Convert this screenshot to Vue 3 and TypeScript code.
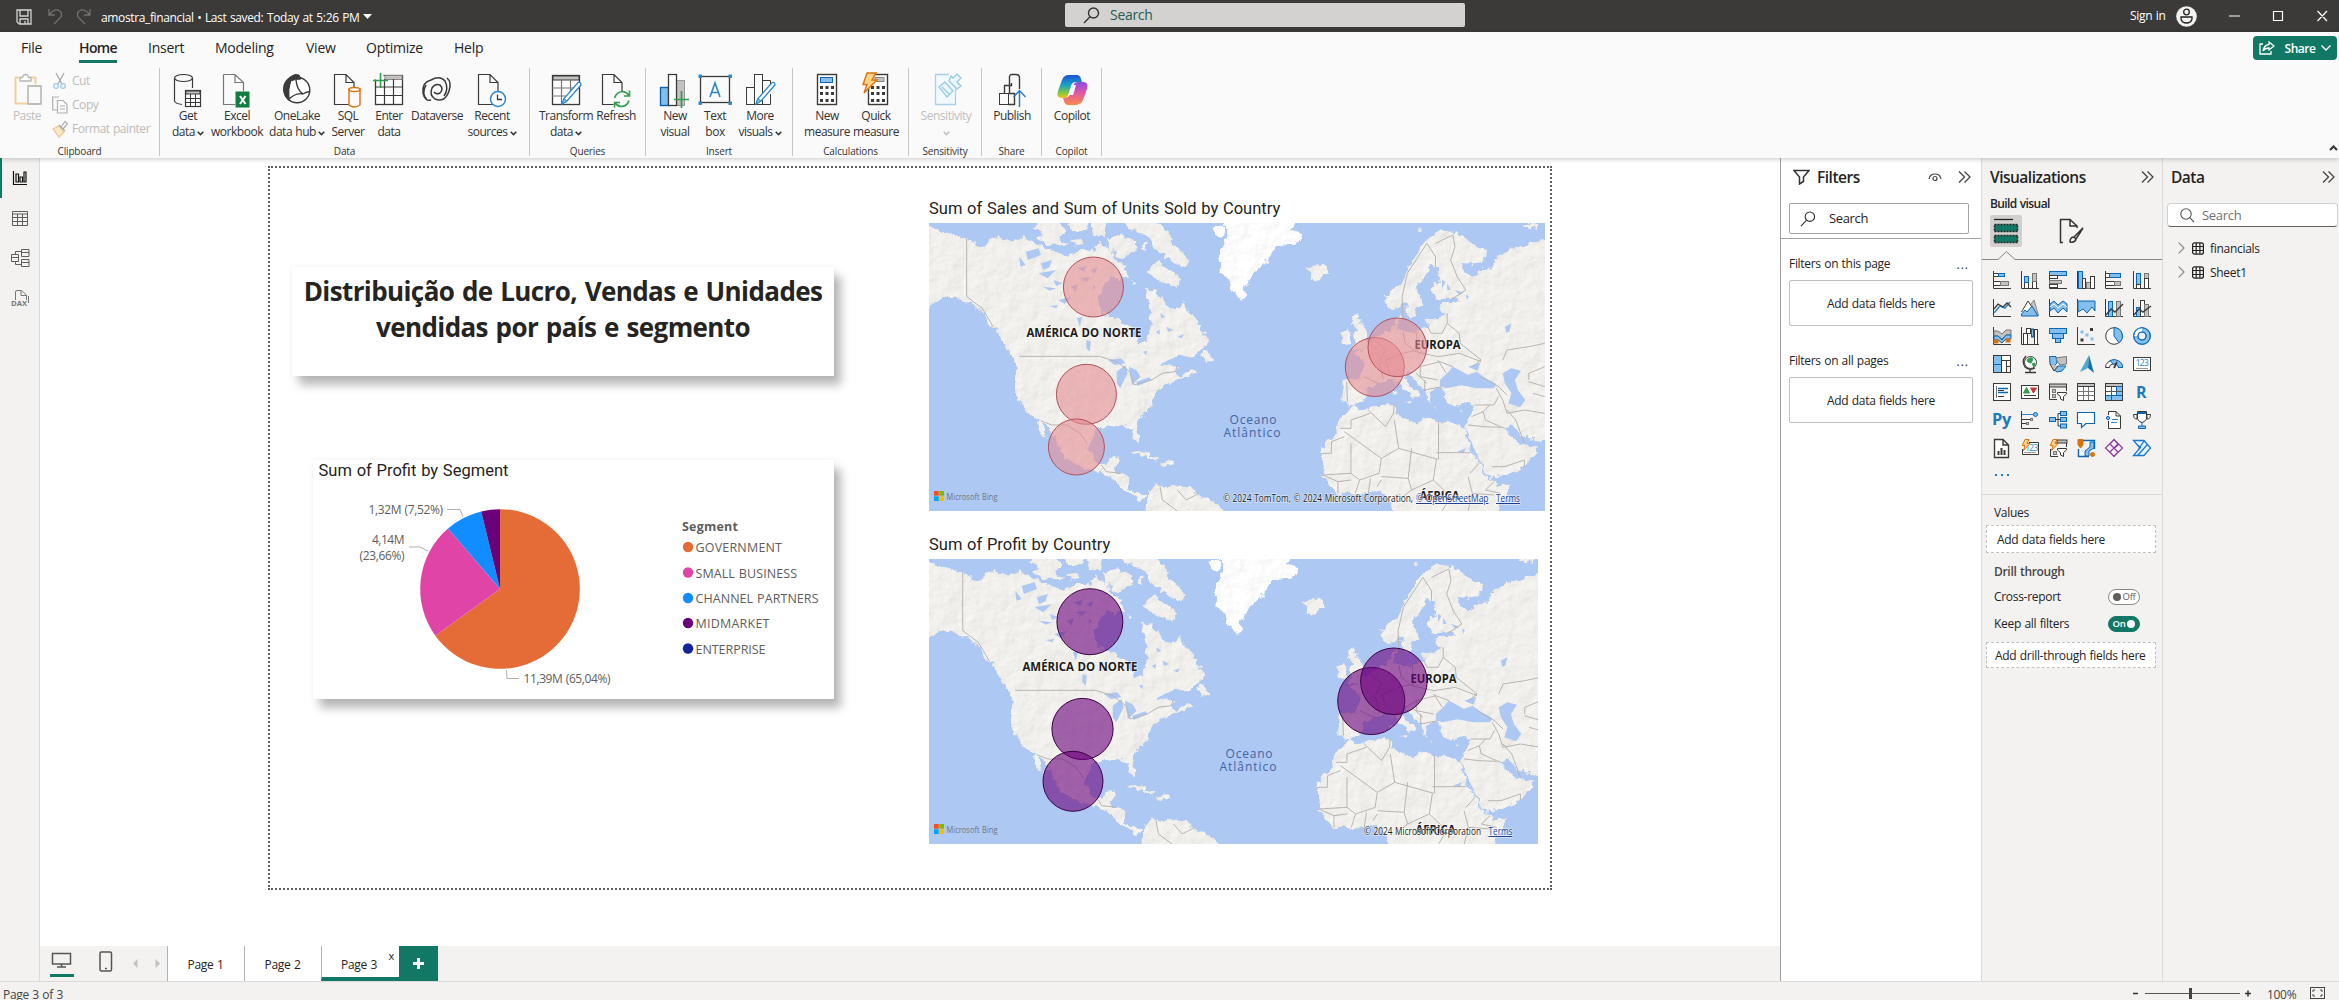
<script setup lang="ts">
import { ref } from 'vue'

const K = '#3b3a39'
const B = '#0a67b5'
const L = '#83beec'
const G = '#c4c2c0'
const GN = '#2f9e4f'
const OR = '#d9730d'

const r = (x: number, y: number, w: number, h: number, fill = 'none', stroke = K, sw = 1) =>
  `<rect x="${x}" y="${y}" width="${w}" height="${h}" fill="${fill}" stroke="${stroke}" stroke-width="${sw}"/>`
const p = (d: string, stroke = K, fill = 'none', sw = 1) =>
  `<path d="${d}" fill="${fill}" stroke="${stroke}" stroke-width="${sw}"/>`
const c = (x: number, y: number, rad: number, fill = 'none', stroke = K, sw = 1) =>
  `<circle cx="${x}" cy="${y}" r="${rad}" fill="${fill}" stroke="${stroke}" stroke-width="${sw}"/>`

const axis = p('M.5 0V17.5H18')
const bolt = p('M4 .5H8L6 4.5H9L2.5 11.5L4 6.5H1.2Z', '#d9730d', '#ffd28a')
const funnel = p('M8.5 9.5H17.5V11L14.5 13.5V17.5L11.5 16V13.5L8.5 11Z', K, '#fff')
const pencil = p('M31 12L17 28L12 31L14 25.5L28 9.5Q31 8.5 31 12Z', '#2b88c8', '#fafafa', 1.3) + p('M12 31L14 25.5L17 28Z', '#2b88c8', L)
const file = (s = K) => p('M2.5 1.5H14L22 9.5V31.5H2.5ZM14 1.5V9.5H22', s, 'none', 1.2)

const icons: Record<string, string> = {
  getdata:
    p('M2.5 5V28Q3 30.5 10 31.5M20.5 5V15', K, 'none', 1.2) +
    `<ellipse cx="11.500" cy="5" rx="9" ry="3.500" fill="none" stroke="${K}" stroke-width="1.200"/>` +
    r(13.5, 17.5, 15, 16, '#fff', K, 1.2) + r(14, 18, 14, 3, G, K) + p('M13.500 25.500H28.500M13.500 29.500H28.500M18.500 21V33M23.500 21V33'),
  excel: p('M2.500 1.500H14L22.500 9.500V18M14 1.500V9.500H22.500M14 31.500H2.500V1.500', '#777', 'none', 1.2) + r(15, 19, 13, 15, '#117c41', '#117c41') + p('M19 23L24.500 31M24.500 23L19 31', '#fff', 'none', 2),
  onelake:
    c(16, 17, 12.8, '#fff', K, 1.4) +
    p('M14 1.500Q2 6 2.500 17Q4 25 8 27Q7 16 9.500 8Q14 6 20 6L18 2Z', K, K) + p('M15 7Q16 17 22 21Q27 18 29 19M7 27Q15 19 22 21M10 7Q5 17 8 27', K, 'none', 1.4),
  sql: file() + p('M17 16V32Q22 36 28 32V16Z', '#d9730d', '#fafafa', 1.4) + `<ellipse cx="22.500" cy="16.500" rx="5.500" ry="2" fill="#fff" stroke="#d9730d" stroke-width="1.400"/>`,
  enter: r(2.5, 2.5, 27, 29, '#fff', K, 1.3) + r(12, 2.5, 17, 4, G, '#888') + p('M2 14H29M2 22.500H29M11.500 6V31M20.500 6V31', K, 'none', 1.2) + r(0, 1, 10, 5, '#fafafa', '#fafafa') + p('M0 7.500H15M7.500 0V15', GN, 'none', 1.6),
  dataverse: p('M26 5Q31 9 28 18Q24 30 14 26Q8 22 11 15Q14 10 19 12Q23 16 19 20Q15 22 13 19M10 7Q1 9 2 20Q4 29 10 27M10 7Q19 2 24 8Q28 16 23 23M6 27Q0 21 5 12', K, 'none', 1.5),
  recent: file() + c(22, 26, 7.5, '#fff', '#2b88c8', 1.5) + p('M21.500 21.500V26.500H26', K, 'none', 1.3),
  transform: r(2.5, 2.5, 27, 29, '#fff', K, 1.3) + r(3, 3, 26, 4, G, K) + p('M2 15H29M2 23H22M11.500 7V31M20.500 7V24', '#777', 'none', 1.2) + pencil,
  refresh: file() + r(14, 19, 17, 15, '#fafafa', '#fafafa') + p('M14.500 25Q17 18.500 23 18.500Q27 19 29 22.500M29.500 17.500V23H24M29 27.500Q27 33.500 21 33.500Q17 33 14.800 29.500M14.500 34.500V29.500H20', '#2f9e4f', 'none', 1.6),
  newvisual: r(1.5, 14.5, 8, 18, L, B, 1.4) + r(17.5, 7.5, 8, 25, G, '#999') + r(9.5, 1.5, 8, 31, '#fff', K, 1.3) + p('M15 26.500H30M22.500 18V35', GN, 'none', 1.7),
  textbox: r(1.5, 3.5, 29, 26, 'none', K, 1.3) + p('M11 24L16 10L21 24M12.800 19.500H19.200', '#2b88c8', 'none', 1.6) + [[1, 3], [31, 3], [1, 30], [31, 30]].map(([x, y]) => r(x - 1, y - 1, 2.4, 2.4, '#2b88c8', '#2b88c8')).join(''),
  more: r(2.5, 14.5, 8, 17) + r(10.5, 1.5, 8, 30, '#fff') + p('M18.500 7.500H26.500V12M26.500 21V31.500H18.500') + pencil,
  newmeasure: r(6.5, 1.5, 19, 30, '#fff', K, 1.4) + r(9.5, 4.5, 12, 5, L, B) + [13, 19, 26].map((y) => [9, 14.5, 20].map((x) => r(x + 0.5, y + 0.5, 2, 2, K)).join('')).join(''),
  quick: r(8.5, 1.500, 19, 30, '#fff', K, 1.4) + r(15, 4.5, 9, 4, G, '#888') + [13, 19, 26].map((y) => [11, 16.5, 22].map((x) => r(x + 0.5, y + 0.5, 2, 2, K)).join('')).join('') + p('M7 0H16L12 7H17L4 20L7 11.500H3Z', OR, '#ffd28a', 1.4),
  sens: p('M19 1.500H5.500V31.500H25.500V16', '#a9d0ea', '#f2f9fd', 1.3) + p('M9 14L15 9L23 18L17 24ZM12 14L19 21M19 8L27 16L31 13L27 9L31 5L27 1L23 5L21 3Z', '#9ccbe8', '#eaf5fc', 1.4),
  publish: r(3.5, 20.5, 9, 11) + p('M8.500 20V12.500H15.500V10M13.500 20V4Q13.500 1.500 16 1.500H20Q23.500 1.500 23.500 5V16M12.500 20.500H18.500V31.500H12.500', K, 'none', 1.4) + p('M23.500 34V18M17.500 24L23.500 17.500L29.500 24', '#2b7cc4', 'none', 1.5),
  copilot: `<defs><linearGradient id="cpa" x1="0" y1="0" x2="0" y2="1"><stop offset="0" stop-color="#1c50d8"/><stop offset=".45" stop-color="#19a5c8"/><stop offset=".75" stop-color="#7cc441"/><stop offset="1" stop-color="#f3c414"/></linearGradient><linearGradient id="cpb" x1="0" y1="0" x2="0" y2="1"><stop offset="0" stop-color="#8a4be8"/><stop offset=".5" stop-color="#e2589f"/><stop offset="1" stop-color="#fb8a4a"/></linearGradient></defs><path d="M9 3Q10 2 13 2H21Q24 2 25 6L26 9H20Q16 9 15 13L12 22Q11 25 8 25H5Q0 25 2 18L6 7Q7 4 9 3Z" fill="url(#cpa)"/><path d="M23 31Q22 32 19 32H12Q9 32 8 28L7 25Q13 25 14 21L18 11Q19 9 22 9H27Q33 9 31 16L27 27Q26 30 23 31Z" fill="url(#cpb)"/><path d="M16 12H20L17 22H13Z" fill="#fff"/>`,
}

const visuals: string[] = [
  axis + r(0.5, 2.5, 5, 3, '#fff') + r(5.5, 2.5, 6, 3, L, B) + r(0.5, 10.5, 7, 4, '#fff') + r(7.5, 10.5, 8, 4, G, '#777'),
  axis + r(3.5, 11.500, 4, 6, '#fff') + r(3.5, 5.5, 4, 6, L, B) + r(11.5, 10.5, 4, 7, '#fff') + r(11.5, 2.5, 4, 8, G, '#777'),
  axis + r(0.5, 0.5, 17, 4, L, B) + r(0.5, 4.5, 8, 3, '#fff') + r(0.5, 9.500, 12, 3, G, '#777') + r(0.5, 13.5, 8, 3, '#fff'),
  axis + r(1.5, 0.5, 4, 17, L, B) + r(5.5, 7.5, 3, 10, '#fff') + r(9.5, 11.5, 4, 6, G, '#777') + r(13.5, 5.5, 4, 12, '#fff'),
  axis + r(0.5, 2.5, 4, 4, '#fff') + r(4.5, 2.5, 11, 4, L, B) + r(0.5, 10.5, 9, 4, '#fff') + r(9.5, 10.5, 6, 4, G, '#777'),
  axis + r(3.5, 2.5, 4, 11, L, B) + r(3.500, 13.5, 4, 4, '#fff') + r(11.5, 2.5, 4, 5, G, '#777') + r(11.5, 7.5, 4, 10, '#fff'),
  axis + p('M1 14L7 7L12 9L17 3', '#2b88c8', 'none', 1.5) + p('M1 10L5 5L10 8L14 4L18 8', K, 'none', 1.3),
  p('M8 8L13 1L17.500 16.500H8Z', '#888', G) + p('M.5 13L7 2L15 14', K, '#fff') + p('M.5 17V15L4 11L6 13L11 7L17 17Z', B, L),
  axis + p('M1 5L5 2L9 6L14 2L18 5V13L14 9L9 14L5 9L1 12Z', B, L) + p('M1 8L5 5L9 9L14 5L18 8', '#fff'),
  axis + p('M1 2H18V12L15 8L10 14L6 10L1 13Z', B, L),
  axis + r(3.5, 2.5, 4, 15, L, B) + r(11.5, 2.5, 4, 15, G, '#777') + p('M1 16L6 10L10 13L18 5', K, 'none', 1.4),
  axis + r(3.5, 8.5, 4, 9, L, B) + r(7.5, 1.5, 4, 16, '#fff') + r(11.5, 5.5, 4, 12, G, '#777') + p('M1 16L6 10L10 13L18 7', K, 'none', 1.4),
  axis + p('M1 4H5L9 7L13 3H18V8H13L9 12L5 9H1Z', '#777', G) + p('M1 9H5L9 13L13 8H18V12H13L9 16L5 13H1Z', B, L) + r(1, 13, 4, 3, OR, OR) + r(13, 12, 4, 3, OR, OR),
  axis + r(2.5, 6.5, 4, 11, '#fff') + r(5.5, 1.5, 4, 5, '#fff') + r(10.500, 2, 2, 8, L, B) + r(13.5, 2.5, 3, 15, '#fff'),
  r(0.5, 1.5, 17, 5, L, B) + r(3.5, 6.5, 11, 5, L, B) + r(6.5, 11.5, 5, 4, L, B),
  axis + r(13.500, 1.500, 2, 2, K) + r(4, 4, 2, 2, L, L) + r(9, 7, 2, 2, L, L) + r(14, 11, 2, 2, L, L) + r(4, 12, 2, 2, K),
  c(9, 9, 8.3, '#fff') + p('M9 .7A8.300 8.300 0 0 1 14 15.700L9 9Z', B, L),
  c(9, 9, 6.3, 'none', B, 5) + c(9, 9, 6.3, 'none', L, 3.4) + p('M2.700 9A6.300 6.300 0 0 1 9 2.700', '#fff', 'none', 3.4) + c(9, 9, 8.3, 'none', B) + c(9, 9, 4, 'none', B),
  r(0.5, 0.5, 8, 17, L, B) + r(8.5, 0.5, 9, 5, '#fff') + r(8.5, 5.5, 5, 12, '#fff') + r(13.5, 5.5, 4, 6, '#fff') + p('M0 9.500H8', B) + r(0.5, 0.5, 17, 17),
  c(9.5, 7.500, 6, '#fff') + p('M6 5Q10 1 12 4L10 8L7 7ZM11 9L14 8L13 12Z', GN, GN) + p('M5 1Q0 6 4 12Q8 16 14 13M9 15V17M4 17.500H15', K, 'none', 1.3),
  p('M.5 1.500H7L8 8L5 11L1 9Z', B, L) + p('M7 3L17.500 1.500V9L11 10L8 6Z', '#777', G) + p('M9 11H17L13 16L8 17L4 14Z', B, L) + p('M1 9L5 16L9 11', K, G),
  `<path d="M12 0L3 17L11 13Z" fill="#4fa9cf"/><path d="M12 0L11 13L17 18Z" fill="#1573a8"/>`,
  p('M.5 12.500A8.500 7.500 0 0 1 17.500 12.500H13.500A4.500 3.500 0 0 0 4.500 12.500Z', K, '#fff') + p('M5 5.500A8.500 7.500 0 0 1 17.500 12.500H13.500A4.500 3.500 0 0 0 8 9Z', B, L) + p('M9 13L12 7', K, 'none', 1.8),
  r(0.5, 2.5, 17, 13, '#fff') + `<text x="9" y="11" font-size="9" textLength="13" text-anchor="middle" fill="#2b88c8" font-family="Open Sans, sans-serif">123</text>` + p('M3 13.500H15', '#999'),
  r(0.5, 0.5, 17, 17, '#fff') + p('M3.500 3V15', '#777') + p('M5 5.500H15M5 9.500H15', B, 'none', 1.6) + p('M5 7.500H11M5 13.500H11', K),
  r(0.5, 2.5, 17, 13, '#fff') + p('M2.500 10L5.500 4.500L8.500 10Z', GN, GN) + p('M9.500 5H15.500L12.500 10Z', '#d13438', '#d13438') + p('M3 12.500H15', K),
  r(0.5, 1, 17, 3, G, K) + p('M.5 4V16.500H8M17.500 4V8', K) + r(3.5, 6.5, 3, 3, G, '#777') + r(3.5, 11.5, 3, 3, G, '#777') + funnel,
  r(0.5, 0.5, 17, 17, '#fff') + r(0.5, 0.5, 17, 3, G) + p('M.5 8.500H17.500M.5 12.500H17.500M6.500 4V17M11.500 4V17', '#777'),
  r(0.5, 0.5, 17, 17, '#fff') + r(0.5, 0.5, 17, 3, G) + r(11.5, 3.5, 6, 14, L, B) + r(0.5, 12.5, 17, 5, L, B) + p('M.5 8.500H17.500M6.500 4V17', '#555') + r(0.5, 0.5, 17, 17),
  `<text x="3" y="15" font-size="16" font-weight="700" fill="#2079b8" font-family="Open Sans, sans-serif">R</text>`,
  `<text x="-1" y="13.500" font-size="16" font-weight="700" textLength="19" lengthAdjust="spacingAndGlyphs" fill="#2079b8" font-family="Open Sans, sans-serif">Py</text>`,
  axis + p('M1 3.500H13', '#2b88c8') + c(14.500, 3.5, 2, L, B) + p('M1 8.500H9M1 12.500H6', K) + r(9.5, 7.5, 2, 2, G, '#777') + r(5.5, 11.5, 2, 2, G, '#777'),
  r(0.5, 6.5, 6, 4, L, B) + r(11.5, 0.5, 6, 4, L, B) + r(11.5, 6.500, 6, 4, L, B) + r(11.5, 13, 6, 4, L, B) + p('M6.500 8.500H11.500M11 2.500H9V15H11'),
  p('M.5 1.500H17.500V12.500H9L4.500 16.500V12.500H.5Z', B, '#fff', 1.2),
  p('M3.500 4V.5H11L15.500 5V17.500H3.500V10M11 .5V5H15.500', K, '#fff') + c(3, 7, 1.6, L, B) + p('M7 8.500H13M6 11.500H12', '#2b88c8'),
  p('M.5 3.500H4V8H2.500Q.5 7 .5 3.500M17.500 3.500H14V8H15.500Q17.500 7 17.500 3.500M4.500 .5H13.500V8Q12 11 9 11.500Q6 11 4.500 8Z', K, '#fff') + p('M5 2H13', B, 'none', 2) + p('M9 11V15M5.500 15H12.500V17.500H5.500Z', B, L),
  p('M1.500 .5H10L15.500 6V18.500H1.500ZM10 .5V6H15.500', K, '#fff', 1.4) + p('M5.500 16V12M8.500 16V9M11.500 16V11', K, 'none', 2),
  p('M8 3.500H17.500V15.500H1.500V10', K, '#fff') + `<text x="10.500" y="11.500" font-size="9" textLength="13" text-anchor="middle" fill="#2b88c8" font-family="Open Sans, sans-serif">123</text>` + p('M3 13.500H15', '#999') + bolt,
  r(8, 1, 10, 3, G) + p('M1.500 10V17.500H9M17.500 4V8', K) + r(4.5, 12.5, 3, 3, G, '#777') + funnel + bolt,
  p('M6 1.500H17.500V10M1.500 10V17.500H12', B, '#fff', 1.4) + p('M8 17V12L13 8V3H17V9L12 12V17Z', B, L) + p('M1 .5H6V6L3.500 9L1 6Z', OR, OR) + c(15.5, 15.5, 2, OR, OR),
  p('M9 .5L17.500 9L9 17.500L.5 9ZM5 5L13 13M13 5L5 13M9 .5L5 5Q7 7 9 9Q13 7 13 5ZM9 17.500Q5 13 5 13M9 17.500L13 13', '#8a3b99', '#fdf4fd', 1.2),
  p('M.5 1.500H11L17.500 9L11 16.500H.5L7 9ZM3 4.500L8 9M11 2L5 11M14 6L5 16', '#1a7ad4', '#eaf4fd', 1.3),
]

interface Cmd { icon: string; a: string; b?: string; w: number; chev?: boolean; off?: boolean }
interface Group { name: string; w: number; pad: number; cmds: Cmd[] }
const groups: Group[] = [
  { name: 'Data', w: 370, pad: 4, cmds: [
    { icon: 'getdata', a: 'Get', b: 'data', w: 48, chev: true },
    { icon: 'excel', a: 'Excel', b: 'workbook', w: 50 },
    { icon: 'onelake', a: 'OneLake', b: 'data hub', w: 70, chev: true },
    { icon: 'sql', a: 'SQL', b: 'Server', w: 32 },
    { icon: 'enter', a: 'Enter', b: 'data', w: 50 },
    { icon: 'dataverse', a: 'Dataverse', w: 46 },
    { icon: 'recent', a: 'Recent', b: 'sources', w: 64, chev: true },
  ] },
  { name: 'Queries', w: 116, pad: 6, cmds: [
    { icon: 'transform', a: 'Transform', b: 'data', w: 60, chev: true },
    { icon: 'refresh', a: 'Refresh', w: 40 },
  ] },
  { name: 'Insert', w: 147, pad: 9, cmds: [
    { icon: 'newvisual', a: 'New', b: 'visual', w: 40 },
    { icon: 'textbox', a: 'Text', b: 'box', w: 40 },
    { icon: 'more', a: 'More', b: 'visuals', w: 50, chev: true },
  ] },
  { name: 'Calculations', w: 116, pad: 9, cmds: [
    { icon: 'newmeasure', a: 'New', b: 'measure', w: 50 },
    { icon: 'quick', a: 'Quick', b: 'measure', w: 48 },
  ] },
  { name: 'Sensitivity', w: 73, pad: 6, cmds: [{ icon: 'sens', a: 'Sensitivity', b: '', w: 62, chev: true, off: true }] },
  { name: 'Share', w: 60, pad: 5, cmds: [{ icon: 'publish', a: 'Publish', w: 50 }] },
  { name: 'Copilot', w: 60, pad: 5, cmds: [{ icon: 'copilot', a: 'Copilot', w: 50 }] },
]

const menu = [
  { t: 'File', w: 58 }, { t: 'Home', w: 69 }, { t: 'Insert', w: 67 }, { t: 'Modeling', w: 91 },
  { t: 'View', w: 60 }, { t: 'Optimize', w: 88 }, { t: 'Help', w: 60 },
]
const active = ref('Home')

const legend = [
  { t: 'GOVERNMENT', c: '#e66c37', y: 87.5, w: 86.5 }, { t: 'SMALL BUSINESS', c: '#e044a7', y: 113, w: 101.5 },
  { t: 'CHANNEL PARTNERS', c: '#118dff', y: 138.5, w: 123 }, { t: 'MIDMARKET', c: '#6b007b', y: 163.5, w: 74 },
  { t: 'ENTERPRISE', c: '#12239e', y: 189, w: 70 },
]
const shares = [[0.6504, '#e66c37'], [0.2366, '#e044a7'], [0.0752, '#118dff'], [0.0378, '#6b007b']] as [number, string][]
let acc = 0
const slices = shares.map(([f, color]) => {
  const at = (t: number) => `${187 + 79.8 * Math.sin(t * 2 * Math.PI)} ${129 - 79.8 * Math.cos(t * 2 * Math.PI)}`
  const d = `M187 129L${at(acc)}A79.8 79.8 0 ${f > 0.5 ? 1 : 0} 1 ${at(acc + f)}Z`
  acc += f
  return { d, color }
})

const land = [
  'M60 130L100 155L130 165L155 175L175 192L185 207L200 190L215 172L232 172L250 182L262 184L285 172L300 182L325 195L345 205L362 212L378 228L400 222L412 208L430 215L450 205L458 180L470 195L490 215L500 240L515 255L520 290L505 295L490 290L475 305L458 345L460 385L480 410L520 430L533 440L545 470L555 495L568 480L570 455L582 430L575 395L570 370L575 345L568 325L590 335L605 350L618 372L630 390L645 385L655 360L662 385L675 410L690 430L705 460L712 485L700 505L680 522L650 530L620 540L600 555L620 560L640 550L636 575L650 590L670 570L687 574L660 595L640 605L620 610L605 620L590 635L582 660L580 680L565 700L550 722L545 740L552 765L552 788L545 790L538 765L530 742L510 735L490 745L470 745L450 752L440 775L437 805L445 840L460 855L480 850L487 830L507 825L505 840L495 858L500 875L520 878L530 895L528 920L540 938L555 940L568 950L560 958L540 952L515 925L500 905L480 890L455 875L425 865L400 850L375 820L365 795L352 765L340 738L325 722L310 715L290 690L275 660L265 620L265 575L270 545L250 520L238 490L225 455L205 430L190 400L170 375L140 360L105 350L80 375L60 395Z',
  'M314 718L328 722L340 775L332 770L322 745Z',
  'M565 1000L568 960L575 930L590 915L620 920L640 915L665 920L685 940L710 955L735 975L750 1000Z',
  'M528 812L545 810L570 820L600 836L590 842L560 828Z', 'M597 846L622 840L635 850L610 855Z', 'M695 535L703 512L712 510L718 528L727 545L705 545Z',
  'M305 140L330 120L365 125L385 150L368 175L395 192L345 195L310 172L330 160Z', 'M385 120H435L430 150L400 158Z', 'M440 120H478L470 172L447 165Z',
  'M395 185L415 175L425 190L405 195Z', 'M505 120H585L600 135L625 165L632 195L668 235L668 255L645 262L625 240L600 220L580 190L560 155L530 150Z', 'M480 175L510 165L545 185L545 205L520 240L500 228L482 205Z',
  'M570 280L578 262L600 235L612 262L625 270L650 300L640 325L615 310L590 295Z', 'M515 270L530 280L525 300L517 292Z', 'M560 190L570 195L565 210L555 205Z', 'M530 305L545 305L545 315L535 315Z',
  'M935 265L960 248L985 262L985 285L955 303L942 292L948 278Z',
  'M1045 402L1060 392L1055 420L1070 440L1075 470L1087 490L1075 505L1045 512L1055 490L1045 465L1055 448L1042 430Z', 'M1018 460L1035 445L1042 465L1035 488L1015 487Z',
  'M1118 370L1130 392L1150 385L1162 370L1172 400L1180 420L1188 415L1190 390L1205 370L1200 340L1195 315L1215 290L1222 258L1240 262L1240 300L1225 330L1235 360L1270 352L1290 365L1250 372L1240 385L1262 400L1240 410L1215 420L1217 445L1195 450L1160 455L1150 450L1148 430L1160 415L1150 405L1138 425L1135 450L1110 460L1095 480L1070 505L1045 520L1065 530L1070 560L1070 590L1040 595L1020 600L1020 665L1035 680L1060 672L1075 650L1080 625L1105 612L1125 600L1140 598L1155 620L1175 640L1185 655L1178 665L1196 642L1180 620L1165 590L1175 580L1190 610L1210 630L1215 660L1228 668L1225 640L1235 625L1252 622L1255 650L1265 670L1290 680L1310 672L1325 675L1318 700L1310 725L1300 737L1308 760L1330 830L1345 865L1365 895L1400 885L1440 860L1470 820L1468 800L1440 795L1425 792L1415 775L1395 740L1410 735L1430 760L1450 775L1495 785L1495 175L1430 200L1395 215L1372 235L1370 265L1340 267L1320 290L1300 270L1295 250L1315 252L1345 245L1350 215L1320 185L1280 155L1245 150L1215 180L1185 230L1165 280L1155 315L1120 345Z',
  'M1045 675L1060 690L1100 675L1140 672L1145 700L1165 715L1195 730L1210 712L1240 725L1290 730L1303 745L1308 780L1320 815L1335 850L1350 880L1370 905L1380 918L1412 910L1400 950L1375 1000H1140L1130 960L1120 950L1100 930L1070 945L1030 940L1010 945L985 910L972 890L975 850L970 815L985 785L1010 745L1015 715L1035 690Z',
  'M1160 665L1180 662L1178 674ZM1138 628L1145 630L1143 648L1137 645ZM1225 680L1245 681L1230 684ZM1290 690L1302 687L1296 694Z', 'M1440 135L1450 130L1475 140L1465 150ZM1188 150L1205 145L1200 155Z',
]
const ice = [
  'M745 120L755 180L735 220L735 260L755 300L770 335L792 360L798 315L825 270L850 240L868 205L920 180L930 155L900 150L915 120Z',
  'M722 140L745 133L748 182L725 160Z',
]
const water = [
  'M1245 600L1262 580L1275 560L1290 570L1310 585L1330 575L1345 590L1375 612L1370 625L1330 625L1295 616L1260 625L1245 618Z', 'M1310 560L1338 548L1332 572Z',
  'M1390 580L1410 565L1432 572L1418 600L1425 630L1442 660L1430 682L1403 670L1410 640L1395 610Z',
  'M500 575L520 555L525 580L508 625L500 610ZM528 560L545 570L555 590L535 615ZM545 605L575 592L580 600L548 618ZM480 540L510 535L520 550L495 555Z',
  'M325 250L350 240L345 262L330 270ZM290 215L320 205L325 225L295 240ZM275 230L290 255L278 260ZM320 280L360 270L340 295ZM330 320L360 325L345 332ZM365 360L395 350L380 372ZM355 300L375 310L360 318ZM345 378L365 375L360 385ZM408 415L420 410L415 440ZM430 480L440 485L438 515L430 505Z',
  'M410 265L430 258L425 275ZM440 270L455 262L450 280ZM415 295L440 290L430 305ZM395 320L410 312L405 335ZM445 315L452 320L446 330Z',
  'M590 455L600 450L598 465ZM615 440L630 450L618 455ZM560 515L570 512L568 525ZM640 470L655 462L650 475ZM600 400L612 410L603 415Z',
  'M1280 330L1300 338L1290 345ZM1305 345L1312 348L1308 360ZM1250 300L1258 305L1250 325ZM1262 310L1270 330L1262 330ZM1395 440L1410 430L1405 455L1398 458ZM1285 815L1305 805L1300 820ZM1430 665L1435 670L1430 675Z',
]
const borders =
  'M154 175V350L190 385L215 440M275 529H460L500 545L530 575L540 615L580 600L605 580L635 575L640 555M325 722L350 735L385 735L415 760L432 790M465 855L475 875L510 880M600 920L605 960L640 993M640 930L660 960L690 940M1160 420L1158 350L1170 280L1215 190L1235 230L1235 260M1235 190L1275 165L1280 200L1270 240L1285 290L1305 330L1270 360M1262 400L1262 430L1290 460L1292 490L1340 540L1320 560M1217 440L1225 460L1250 460L1262 430M1190 450L1195 510L1160 520L1120 540L1130 580M1160 455L1165 490L1190 515L1240 530L1290 520L1340 545M1095 480L1120 510L1105 545L1115 600M1070 590L1105 612M1030 605L1032 665M1175 580L1200 560L1245 545L1275 560M1200 560L1200 590L1240 600M1210 600V630L1250 620M1190 580L1215 610M1240 540L1260 580M1340 590L1380 620L1400 645M1375 625L1390 660L1400 700L1440 690L1487 700M1325 675L1370 675L1380 650M1318 710L1345 695L1360 675M1345 695L1350 720L1385 740L1395 745M1310 735L1345 740L1385 742M1365 860L1395 860L1440 840L1440 860M1390 540L1400 510L1450 500L1487 490M1450 600L1450 580L1487 560M1450 605L1487 620M1460 640L1487 650M1400 690L1420 720L1440 790M1140 672L1138 700L1120 740L1080 690M1015 745H1040V720L1085 700M970 820H995V785L1025 770M1025 755L1110 835L1150 805L1140 720M1150 805L1240 838M1242 725V838M1237 818H1315M1040 790V880L975 885M1110 835L1105 880L1060 900L1040 880M1180 805L1172 895L1110 890M1172 895L1180 930L1150 960M1237 838L1230 900L1180 930M1230 900L1270 950L1250 993M1315 880L1335 850M1310 890L1320 940L1370 945M1060 900L1050 940M1085 895L1080 940M1010 905V940M975 885L1010 905L1040 900M1100 920L1110 900M1320 940L1310 993M1370 905L1350 930L1385 940'

interface Bubble { x: number; y: number; r: number }
const maps: { w: number; h: number; dx: number; dy: number; kind: string; bubbles: Bubble[] }[] = [
  { w: 616, h: 288, dx: 0, dy: 0, kind: 'rose', bubbles: [
    { x: 164.4, y: 64, r: 30 }, { x: 157.4, y: 171.3, r: 30 }, { x: 147.4, y: 224, r: 28 }, { x: 445.8, y: 144, r: 29.5 }, { x: 468.3, y: 124.3, r: 29.3 } ] },
  { w: 609, h: 285, dx: -4, dy: -2, kind: 'plum', bubbles: [
    { x: 160.9, y: 62.7, r: 33 }, { x: 153.5, y: 170, r: 30.6 }, { x: 144, y: 222.3, r: 30 }, { x: 442.3, y: 142, r: 33.6 }, { x: 464.9, y: 122.3, r: 33.3 } ] },
]
const mapTitles = ['Sum of Sales and Sum of Units Sold by Country', 'Sum of Profit by Country']
const pages = ['Page 1', 'Page 2', 'Page 3']
</script>

<template>
  <div class="app">
    <header class="titlebar">
      <svg class="quick" width="80" height="20" viewBox="0 0 80 20" fill="none" stroke="#d5d5d4" stroke-width="1.300">
        <path d="M1 3H15V17H3.500L1 15ZM4 3V9H12V3M4 17V12H12V17M9 14V17" />
        <path stroke="#737270" d="M33 2V8H39M33.500 7.500Q38 2 42 3Q47 5 45 10L38 17M74 2V8H68M73.500 7.500Q69 2 65 3Q60 5 62 10L69 17" />
      </svg>
      <span class="doc">amostra_financial • Last saved: Today at 5:26 PM</span>
      <svg class="tri" width="9" height="5" viewBox="0 0 9 5"><path d="M0 0H9L4.500 5Z" fill="#fff" /></svg>
      <div class="gsearch">
        <svg width="17" height="17" viewBox="0 0 17 17" fill="none" stroke="#333" stroke-width="1.400"><circle cx="10.500" cy="6" r="5" /><path d="M7 9.700L1 16" /></svg>
        <span>Search</span>
      </div>
      <span class="sign">Sign in</span>
      <svg class="avatar" width="21" height="21" viewBox="0 0 21 21"><circle cx="10.500" cy="10.500" r="10.300" fill="#f3f2f1" /><circle cx="10.500" cy="6" r="2.800" fill="none" stroke="#222" stroke-width="1.300" /><path d="M5 11H16V13Q15 17 10.500 17Q6 17 5 13Z" fill="none" stroke="#222" stroke-width="1.300" /></svg>
      <svg class="winbtn" width="100" height="12" viewBox="0 0 100 12" fill="none" stroke="#fff" stroke-width="1.200"><path d="M0 6H11M44.500 1.500H53.500V10.500H44.500ZM88.500 1L98 11M98 1L88.500 11" /></svg>
    </header>

    <section class="ribbon">
      <nav class="menu">
        <span v-for="m in menu" :key="m.t" class="tab" :class="{ on: m.t === active }" :style="{ width: m.w + 'px' }" @click="active = m.t"><b>{{ m.t }}</b></span>
        <button class="share">
          <svg width="16" height="14" viewBox="0 0 16 14" fill="none" stroke="#fff" stroke-width="1.300"><path d="M4 3H1V13H12V10M10 1L15 5L10 9V7Q6 7 4 10Q5 4 10 3.500Z" /></svg>
          <span>Share</span>
          <svg width="10" height="6" viewBox="0 0 10 6" fill="none" stroke="#fff" stroke-width="1.400"><path d="M.5 .5L5 5L9.500 .5" /></svg>
        </button>
      </nav>
      <div class="groups">
        <div class="group clip">
          <div class="cliprow">
            <div class="cmd paste">
              <svg width="32" height="36" viewBox="0 0 32 36" fill="none" stroke-width="1.300"><path d="M8 4.500H4.500V30.500H16M20 4.500H24.500V11" stroke="#f0cfa0" stroke-width="2" /><path d="M9 8H20V4.500H17.500Q17 1.500 14.500 1.500Q12 1.500 11.500 4.500H9Z" stroke="#b5b5b5" fill="#fff" /><path d="M17 13H30V31H17Z" stroke="#aaa" fill="#fafafa" /></svg>
              <span>Paste</span>
            </div>
            <ul class="clipcol">
              <li><svg width="16" height="18" viewBox="0 0 16 18" fill="none" stroke-width="1.300"><path d="M4 1L10 12M12 1L6 12" stroke="#a8a8a8" /><circle cx="4" cy="14" r="2.300" stroke="#9fcbe8" /><circle cx="11" cy="14" r="2.300" stroke="#9fcbe8" /></svg>Cut</li>
              <li><svg width="16" height="18" viewBox="0 0 16 18" fill="none" stroke="#b0b0b0" stroke-width="1.200"><path d="M5 14H.7V1H7M5.500 4.500H11L15 8.500V17H5.500ZM8 10H13M8 13H13" /></svg>Copy</li>
              <li><svg width="16" height="18" viewBox="0 0 16 18" fill="none" stroke-width="1.200"><path d="M1 9L7 6L12 12L7 17Z" stroke="#ecc691" fill="#fbe6c6" /><path d="M7 5L13 11M9 7L13 1.500L15.500 3.500L11 9" stroke="#aaa" /></svg>Format painter</li>
            </ul>
          </div>
          <span class="gname">Clipboard</span>
        </div>
        <div v-for="g in groups" :key="g.name" class="group" :style="{ width: g.w + 'px' }">
          <div class="cmds" :style="{ paddingLeft: g.pad + 'px' }">
            <div v-for="(k, i) in g.cmds" :key="i" class="cmd" :class="{ off: k.off }" :style="{ width: k.w + 'px' }">
              <svg width="32" height="36" viewBox="0 0 32 36" v-html="icons[k.icon]"></svg>
              <span>{{ k.a }}</span>
              <span class="l2">{{ k.b }}<svg v-if="k.chev" class="chev" width="7" height="5" viewBox="0 0 7 5"><path d="M.7 .8L3.500 3.600L6.300 .8" fill="none" stroke="currentColor" stroke-width="1.500" /></svg></span>
            </div>
          </div>
          <span class="gname">{{ g.name }}</span>
        </div>
        <svg class="collapse" width="9" height="6" viewBox="0 0 9 6"><path d="M1 5L4.500 1.500L8 5" fill="none" stroke="#333" stroke-width="2" /></svg>
      </div>
    </section>

    <div class="body">
      <aside class="rail">
        <div class="ri on"><svg width="18" height="18" viewBox="0 0 18 18" fill="none" stroke="#111" stroke-width="1.200"><path d="M2.500 2V15.500H16M5 5H7.500V13H5ZM9 8H11.500V13H9ZM13 3H15V13H13Z" /></svg></div>
        <div class="ri"><svg width="18" height="18" viewBox="0 0 18 18" fill="none" stroke="#605e5c"><path d="M1.500 2.500H16.500V16.500H1.500ZM1.500 5H16.500M1.500 8.500H16.500M1.500 12.500H16.500M6.500 5V16M11.500 5V16" /></svg></div>
        <div class="ri"><svg width="19" height="18" viewBox="0 0 19 18" fill="none" stroke="#605e5c"><path d="M.5 5.500H7.500V12.500H.5ZM.5 8.500H7.500M10.500 .5H18V7.500H10.500ZM10.500 3.500H18M10.500 10.500H18V17.500H10.500ZM10.500 13.500H18M4.500 5.500V2.500H10.500M4.500 12.500V15.500H10.500" /></svg></div>
        <div class="ri"><svg width="20" height="18" viewBox="0 0 20 18" fill="none" stroke="#777"><path d="M4.500 11V3Q4.500 1.500 6 1.500H10.500L15.500 6V11M10 1.500V6.500H15.500M17.500 7V14" /><text x="0" y="17" font-size="7" font-weight="700" font-family="Open Sans, sans-serif" letter-spacing="0" fill="#777" stroke="none" textLength="16" lengthAdjust="spacingAndGlyphs">DAX</text></svg></div>
      </aside>

      <main class="work">
        <div class="stage">
          <div class="page">
            <div class="leftcol">
              <div class="card headline"><p>Distribuição de Lucro, Vendas e Unidades<br />vendidas por país e segmento</p></div>
              <div class="card piecard">
                <svg width="521" height="239" viewBox="0 0 521 239" class="pie">
                  <text class="din" x="5.500" y="16" textLength="190">Sum of Profit by Segment</text>
                  <path v-for="s in slices" :key="s.color" :d="s.d" :fill="s.color" />
                  <g fill="none" stroke="#b0aeac"><path d="M134 49.500H147L150 57" /><path d="M96 87H107L115 91" /><path d="M193.500 210L194 218.500H206" /></g>
                  <g class="lab">
                    <text x="55.500" y="54" textLength="74.500">1,32M (7,52%)</text>
                    <text x="59" y="84" textLength="32.500">4,14M</text>
                    <text x="46.500" y="100" textLength="45">(23,66%)</text>
                    <text x="210.500" y="223" textLength="87">11,39M (65,04%)</text>
                    <text class="leg bold" x="369" y="70.500" textLength="56">Segment</text>
                    <g v-for="l in legend" :key="l.t"><circle cx="375" :cy="l.y - 0.500" r="5.200" :fill="l.c" /><text class="leg" x="382.500" :y="l.y + 4.500" :textLength="l.w">{{ l.t }}</text></g>
                  </g>
                </svg>
              </div>
            </div>
            <div class="rightcol">
              <figure v-for="(m, i) in maps" :key="m.kind" class="mapfig">
                <figcaption :class="m.kind">{{ mapTitles[i] }}</figcaption>
                <svg :width="m.w" :height="m.h" :viewBox="`0 0 ${m.w} ${m.h}`" class="map">
                  <defs>
                    <filter :id="'coast' + i" x="0" y="0" width="100%" height="100%" color-interpolation-filters="sRGB">
                      <feTurbulence type="fractalNoise" baseFrequency="0.130" numOctaves="3" seed="4" result="n" />
                      <feDisplacementMap in="SourceGraphic" in2="n" scale="9" xChannelSelector="R" yChannelSelector="G" result="d" />
                      <feTurbulence type="fractalNoise" baseFrequency="0.070" numOctaves="4" seed="9" result="h" />
                      <feDiffuseLighting in="h" surfaceScale="1.100" lighting-color="#ffffff" result="l"><feDistantLight azimuth="225" elevation="62" /></feDiffuseLighting>
                      <feComposite in="d" in2="l" operator="arithmetic" k1="0.350" k2="0.680" k3="0" k4="0" result="s" />
                      <feComposite in="s" in2="d" operator="in" />
                    </filter>
                  </defs>
                  <rect width="616" height="288" fill="#adc8f2" />
                  <g :transform="`translate(${m.dx} ${m.dy})`">
                    <g :filter="`url(#coast${i})`">
                      <rect x="0" y="0" width="620" height="292" fill="none" />
                      <g transform="scale(.43365 .33333) translate(-67 -129)">
                        <path v-for="(d, j) in land" :key="j" :d="d" fill="#f3f2ee" />
                        <path v-for="(d, j) in ice" :key="'i' + j" :d="d" fill="#ffffff" />
                      </g>
                    </g>
                    <g transform="scale(.43365 .33333) translate(-67 -129)">
                      <path v-for="(d, j) in water" :key="j" :d="d" fill="#adc8f2" />
                      <path :d="borders" fill="none" stroke="#b9b6b2" stroke-width="1" vector-effect="non-scaling-stroke" stroke-linejoin="round" />
                    </g>
                    <g class="places">
                      <text x="97.500" y="114" textLength="115" lengthAdjust="spacingAndGlyphs">AMÉRICA DO NORTE</text>
                      <text x="485.500" y="126" textLength="46" lengthAdjust="spacingAndGlyphs">EUROPA</text>
                      <text x="490.500" y="277" textLength="40" lengthAdjust="spacingAndGlyphs">ÁFRICA</text>
                      <text class="sea" x="300.500" y="200.500" textLength="47">Oceano</text>
                      <text class="sea" x="294.500" y="213.500" textLength="57">Atlântico</text>
                    </g>
                  </g>
                  <circle v-for="(b, j) in m.bubbles" :key="j" :cx="b.x" :cy="b.y" :r="b.r" :class="m.kind" />
                  <g :transform="`translate(5 ${m.h - 20})`">
                    <path d="M0 0H4.700V4.700H0Z" fill="#f25022" /><path d="M5.300 0H10V4.700H5.300Z" fill="#7fba00" /><path d="M0 5.300H4.700V10H0Z" fill="#00a4ef" /><path d="M5.300 5.300H10V10H5.300Z" fill="#ffb900" />
                    <text class="bing" x="12.500" y="8.500" textLength="51" lengthAdjust="spacingAndGlyphs">Microsoft Bing</text>
                  </g>
                  <g v-if="i === 0" class="copy">
                    <text x="294" y="279" textLength="190" lengthAdjust="spacingAndGlyphs">© 2024 TomTom, © 2024 Microsoft Corporation,</text>
                    <text class="link" x="487" y="279" textLength="72.500" lengthAdjust="spacingAndGlyphs">© OpenStreetMap</text>
                    <text class="link" x="567" y="279" textLength="24" lengthAdjust="spacingAndGlyphs">Terms</text>
                  </g>
                  <g v-else class="copy">
                    <text x="435" y="276" textLength="117" lengthAdjust="spacingAndGlyphs">© 2024 Microsoft Corporation</text>
                    <text class="link" x="559.500" y="276" textLength="24" lengthAdjust="spacingAndGlyphs">Terms</text>
                  </g>
                </svg>
              </figure>
            </div>
          </div>
        </div>
        <footer class="tabs">
          <div class="views">
            <span class="dev on"><svg width="21" height="16" viewBox="0 0 21 16" fill="none" stroke="#555" stroke-width="1.500"><path d="M1.500 1.500H19.500V12H1.500ZM10.500 12V15M6 15H15" /></svg></span>
            <svg class="phone" width="14" height="21" viewBox="0 0 14 21" fill="none" stroke="#555" stroke-width="1.500"><rect x="1" y="1" width="11.500" height="19" rx="1.500" /><path d="M6 17.500H8" /></svg>
            <svg class="arrows" width="27" height="9" viewBox="0 0 27 9" fill="#c3c1bf"><path d="M4.500 0V9L0 4.500ZM22.500 0V9L27 4.500Z" /></svg>
          </div>
          <div v-for="pg in pages" :key="pg" class="ptab" :class="{ on: pg === 'Page 3' }">{{ pg }}<i v-if="pg === 'Page 3'">x</i></div>
          <button class="plus"><svg width="11" height="11" viewBox="0 0 11 11"><path d="M5.500 0V11M0 5.500H11" stroke="#fff" stroke-width="3" /></svg></button>
        </footer>
      </main>

      <aside class="filters">
        <div class="phead">
          <svg width="17" height="16" viewBox="0 0 17 16" fill="none" stroke="#333" stroke-width="1.500"><path d="M1 1.500H16L10.500 8V12.500L6.500 15V8Z" /></svg>
          <h2>Filters</h2>
          <svg class="eye" width="14" height="9" viewBox="0 0 14 9" fill="none" stroke="#444" stroke-width="1.200"><path d="M1 6Q2 1 7 1Q12 1 13 6" /><circle cx="7" cy="5.500" r="2" /></svg>
          <svg class="dbl" width="13" height="12" viewBox="0 0 13 12"><path d="M1 .5L6.500 6L1 11.500M6.500 .5L12 6L6.500 11.500" /></svg>
        </div>
        <div class="fsearch"><svg width="16" height="16" viewBox="0 0 17 17" fill="none" stroke="#333" stroke-width="1.200"><circle cx="10.500" cy="6" r="5" /><path d="M7 9.700L1 16" /></svg><span>Search</span></div>
        <div class="fgroup"><div class="frow"><span>Filters on this page</span><i>...</i></div><div class="fbox">Add data fields here</div></div>
        <div class="fgroup"><div class="frow"><span>Filters on all pages</span><i>...</i></div><div class="fbox">Add data fields here</div></div>
      </aside>

      <aside class="viz">
        <div class="phead"><h2>Visualizations</h2><svg class="dbl" width="13" height="12" viewBox="0 0 13 12"><path d="M1 .5L6.500 6L1 11.500M6.500 .5L12 6L6.500 11.500" /></svg></div>
        <div class="bv">Build visual</div>
        <div class="modes">
          <span class="mode on"><svg width="26" height="26" viewBox="0 0 26 26"><path d="M1 1.500H20" stroke="#222" stroke-width="1.300" /><g fill="#117865" stroke="#222" stroke-width="1.500" stroke-dasharray="2 1"><rect x="1.500" y="6.500" width="23" height="7" /><rect x="1.500" y="17.500" width="23" height="7" /></g></svg></span>
          <svg width="26" height="26" viewBox="0 0 26 26" fill="none" stroke="#333" stroke-width="1.500"><path d="M4 24.500H1.500V1.500H11L18 8V10M11 1.500V8H18" /><path d="M24 10L15 19L17 21ZM15 19Q11 19 11 24Q16 25 17 21" /></svg>
        </div>
        <svg class="caretline" width="180" height="9" viewBox="0 0 180 9" fill="none" stroke="#8a8886"><path d="M0 8.500H16L24.500 .7L33 8.500H180" /></svg>
        <div class="vgrid"><svg v-for="(v, i) in visuals" :key="i" width="19" height="19" viewBox="0 0 19 19" v-html="v"></svg></div>
        <div class="vdots"><b></b><b></b><b></b></div>
        <div class="wells">
          <div class="wl">Values</div>
          <div class="well">Add data fields here</div>
          <div class="wl strong">Drill through</div>
          <div class="wl tog">Cross-report<span class="sw"><em></em>Off</span></div>
          <div class="wl tog two">Keep all filters<span class="sw on">On<em></em></span></div>
          <div class="well drill">Add drill-through fields here</div>
        </div>
      </aside>

      <aside class="data">
        <div class="phead"><h2>Data</h2><svg class="dbl" width="13" height="12" viewBox="0 0 13 12"><path d="M1 .5L6.500 6L1 11.500M6.500 .5L12 6L6.500 11.500" /></svg></div>
        <div class="dsearch"><svg width="15" height="15" viewBox="0 0 15 15" fill="none" stroke="#555" stroke-width="1.100"><circle cx="6" cy="6" r="5.200" /><path d="M9.700 9.700L14 14" /></svg><span>Search</span></div>
        <div v-for="t in ['financials', 'Sheet1']" :key="t" class="table">
          <svg width="7" height="12" viewBox="0 0 7 12" fill="none" stroke="#8a8886" stroke-width="1.200"><path d="M.7 .7L6 6L.7 11.300" /></svg>
          <svg width="12" height="13" viewBox="0 0 12 13" fill="none" stroke="#222" stroke-width="1.200"><rect x=".6" y=".8" width="10.800" height="11.400" rx="2" /><path d="M4.200 1V12M7.900 1V12M.6 4.500H11.400M.6 8.500H11.400" /></svg>
          <span>{{ t }}</span>
        </div>
      </aside>
    </div>

    <footer class="status">
      <span>Page 3 of 3</span>
      <svg class="slider" width="118" height="12" viewBox="0 0 118 12" stroke="#555"><path d="M12 6.500H107" /><path d="M0 6.500H5M112 6.500H118M115 3.500V9.500" stroke="#333" stroke-width="1.500" /><rect x="56" y="1" width="3" height="11" fill="#444" stroke="none" /></svg>
      <span class="pct">100%</span>
      <svg class="fit" width="15" height="12" viewBox="0 0 15 12" fill="none" stroke="#444"><rect x=".5" y=".5" width="14" height="11" /><path d="M3 5V3H5M12 5V3H10M3 7V9H5M12 7V9H10" /></svg>
    </footer>
  </div>
</template>

<style>
body { margin: 0; overflow: hidden; }
</style>

<style scoped>
* { box-sizing: border-box; }
.app { width: 2339px; height: 1000px; display: flex; flex-direction: column; overflow: hidden; background: #fff; color: #252423; font: 12px/16px 'Open Sans', 'Noto Sans', sans-serif; letter-spacing: -0.3px; word-spacing: 0.6px; white-space: nowrap; }
svg { display: block; flex: none; }
h2, p, ul, figure { margin: 0; padding: 0; }
i, em { font-style: normal; }
button { border: 0; padding: 0; font: inherit; letter-spacing: inherit; }

.titlebar { height: 32px; flex: none; background: #3b3a38; color: #fff; display: flex; align-items: center; }
.quick { margin-left: 16px; margin-top: 1px; }
.doc { margin-left: 5px; width: 256px; padding-top: 4px; letter-spacing: -0.36px; word-spacing: 0.8px; }
.tri { margin-left: 6px; }
.gsearch { margin-left: 693px; width: 400px; height: 24px; margin-top: -2px; border-radius: 2px; background: #d3d2d0; color: #245c50; display: flex; align-items: center; padding-left: 18px; font-size: 14px; }
.gsearch span { margin-left: 10px; margin-top: -1px; }
.sign { margin-left: 665px; width: 36px; }
.avatar { margin-left: 10px; }
.winbtn { margin-left: 32px; }

.ribbon { height: 126px; flex: none; background: #fafafa; box-shadow: 0 1px 5px rgba(0, 0, 0, 0.22); position: relative; z-index: 2; }
.menu { height: 35px; display: flex; padding-left: 21px; font-size: 14px; letter-spacing: -0.25px; }
.tab { line-height: 32px; }
.tab b { font-weight: 400; display: inline-block; height: 31px; }
.tab.on b { font-weight: 600; border-bottom: 3px solid #117865; letter-spacing: -0.6px; }
.share { margin: 4px 2px 0 auto; width: 84px; height: 24px; border-radius: 4px; background: #117865; color: #fff; display: flex; align-items: center; justify-content: center; font-size: 12px; font-weight: 600; letter-spacing: -0.45px; }
.share span { margin: 1px 5px 0 9px; }
.groups { display: flex; height: 89px; position: relative; margin-top: 1px; }
.group { height: 88px; border-right: 1px solid #c8c6c4; display: flex; flex-direction: column; justify-content: space-between; flex: none; }
.clip { width: 160px; }
.cliprow { display: flex; padding-left: 10px; }
.clipcol { list-style: none; margin-left: 8px; padding-top: 1px; color: #bdbbb9; }
.clipcol li { display: flex; align-items: center; gap: 4px; height: 24px; letter-spacing: -0.45px; }
.cmds { display: flex; }
.cmd { display: flex; flex-direction: column; align-items: center; flex: none; padding-top: 5px; color: #333; letter-spacing: -0.48px; }
.cmd svg { overflow: visible; }
.cmd svg:not(.chev) { margin-bottom: -1px; }
.cmd span { line-height: 16px; }
.paste { width: 34px; }
.paste, .cmd.off { color: #c0bebc; }
.l2 { display: flex; align-items: center; gap: 2px; height: 16px; }
.chev { margin-top: 3px; }
.gname { align-self: center; font-size: 10px; line-height: 11px; letter-spacing: -0.15px; color: #333; position: relative; top: 1px; }
.collapse { position: absolute; right: 1px; top: 77px; }

.body { display: flex; flex: none; height: 823px; }
.rail { width: 40px; background: #f3f2f1; border-right: 1px solid #dcdad8; flex: none; }
.ri { height: 40px; display: flex; align-items: center; border-left: 2px solid transparent; padding-left: 9px; }
.ri.on { border-left-color: #117865; }

.work { width: 1740px; display: flex; flex-direction: column; flex: none; }
.stage { height: 788px; padding: 8px 0 0 228px; }
.page { width: 1284px; height: 724px; border: 2px dotted #605e5c; display: flex; }
.leftcol { width: 659px; padding: 99px 0 0 22px; flex: none; }
.card { background: #fff; box-shadow: 7px 9px 9px rgba(0, 0, 0, 0.28), 0 0 6px rgba(0, 0, 0, 0.06); }
.headline { width: 542px; height: 109px; text-align: center; padding-top: 6px; }
.headline p { font-size: 26px; line-height: 36px; font-weight: 700; letter-spacing: -0.6px; word-spacing: 1.5px; }
.piecard { width: 521px; height: 239px; margin: 84px 0 0 21px; }
.din { font: 16.500px Roboto, sans-serif; fill: #252423; letter-spacing: 0; }
.lab { fill: #605e5c; font-size: 12px; letter-spacing: 0; }
.leg { font-size: 12.500px; }
.bold { font-weight: 700; }
.rightcol { padding-top: 32px; }
.mapfig { display: block; }
.mapfig + .mapfig { margin-top: 24px; }
figcaption { font: 16.500px/18px Roboto, sans-serif; height: 23px; letter-spacing: 0; }
figcaption.plum { height: 24px; padding-top: 1px; }
.map { overflow: hidden; }
circle.rose { fill: #e58a91; fill-opacity: 0.580; stroke: #b0525c; }
circle.plum { fill: #6b007b; fill-opacity: 0.600; stroke: #3c0046; }
.places { font-size: 12px; font-weight: 700; fill: #1c1c1c; letter-spacing: 0; paint-order: stroke; stroke: rgba(255, 255, 255, 0.55); stroke-width: 1.500px; }
.sea { fill: #4465a5; font-weight: 500; stroke: none; }
.bing { font-size: 9.500px; fill: #757575; letter-spacing: 0; }
.copy { font: 10px 'Open Sans', sans-serif; fill: #222; letter-spacing: 0; paint-order: stroke; stroke: rgba(255, 255, 255, 0.6); stroke-width: 1.500px; }
.link { fill: #1c3f94; text-decoration: underline; }

.tabs { height: 35px; background: #f3f2f1; display: flex; }
.views { width: 127px; display: flex; padding-left: 10px; flex: none; }
.dev { width: 24px; height: 31px; padding: 6px 0 0 1px; border-bottom: 3px solid #117865; }
.phone { margin: 5px 0 0 25px; }
.arrows { margin: 13px 0 0 20px; }
.ptab { width: 77px; background: #fff; border-left: 1px solid #b3b0ad; text-align: center; line-height: 38px; position: relative; padding-right: 1px; }
.ptab.on { border-bottom: 4px solid #117865; width: 78px; padding-right: 3px; }
.ptab i { position: absolute; right: 5px; top: -9px; font-size: 11px; }
.plus { width: 39px; background: #117865; display: flex; align-items: center; justify-content: center; }

.phead { display: flex; align-items: center; height: 20px; margin-top: 9px; }
h2 { font-size: 15.500px; line-height: 20px; font-weight: 600; letter-spacing: -0.5px; }
.dbl { fill: none; stroke: #444; stroke-width: 1.300; }
.filters { width: 201px; border-left: 1px solid #a19f9d; background: #fff; flex: none; }
.filters .phead { padding-left: 12px; }
.filters h2 { margin-left: 7px; width: 44px; }
.eye { margin: 0 17px 0 67px; }
.filters .dbl { margin-left: -1px; }
.fsearch { margin: 16px 0 0 8px; width: 180px; height: 31px; border: 1px solid #a6a4a2; border-radius: 2px; display: flex; align-items: center; padding-left: 10px; font-size: 13px; letter-spacing: -0.35px; }
.fsearch span { margin: -1px 0 0 13px; }
.fgroup { padding: 27px 0 0 8px; }
.fsearch + .fgroup { height: 88px; margin-top: 4px; border-top: 1px solid #a6a4a2; padding-top: 17px; }
.frow { display: flex; justify-content: space-between; width: 180px; height: 24px; }
.frow i { letter-spacing: 1px; margin-top: 1px; }
.fbox { width: 184px; height: 46px; border: 1px solid #c2c0be; border-radius: 2px; text-align: center; line-height: 45px; }

.viz { width: 181px; background: #f3f2f1; border-left: 1px solid #dddbd9; flex: none; }
.viz .phead { padding-left: 8px; }
.viz .dbl, .data .dbl { margin-left: auto; margin-right: 8px; }
.bv { margin: 8px 0 0 8px; height: 20px; line-height: 17px; font-weight: 600; letter-spacing: -0.6px; }
.modes { display: flex; margin-left: 8px; height: 32px; align-items: center; }
.mode { width: 32px; height: 32px; background: #d2d0ce; border-radius: 2px; padding: 3px; margin-right: 37px; }
.caretline { margin-top: 4px; }
.vgrid { display: grid; grid-template-columns: repeat(6, 28px); grid-auto-rows: 28px; padding: 11px 0 0 11px; }
.vgrid svg { overflow: visible; }
.vdots { display: flex; gap: 4px; padding: 7px 0 18px 13px; }
.vdots b { width: 2px; height: 2px; background: #2079b8; }
.wells { border-top: 1px solid #dcdad8; padding-top: 9px; }
.wl { margin-left: 12px; height: 21px; line-height: 18px; }
.well { margin-left: 4px; width: 170px; height: 28px; background: #fff; border: 1px dashed #c2c0be; line-height: 27px; padding-left: 10px; }
.strong { font-weight: 600; color: #484644; margin-top: 10px; height: 26px; }
.tog { display: flex; justify-content: space-between; width: 146px; height: 27px; line-height: 16px; }
.sw { width: 32px; height: 16px; border: 1px solid #8a8886; background: #fff; border-radius: 8px; display: flex; align-items: center; justify-content: center; gap: 2px; font-size: 9.500px; color: #605e5c; }
.sw em { width: 8px; height: 8px; border-radius: 50%; background: #605e5c; }
.sw.on { background: #117865; border-color: #117865; color: #fff; font-weight: 600; }
.sw.on em { background: #fff; }
.drill { height: 26px; line-height: 25px; padding-left: 8px; margin-top: -1px; }

.data { width: 177px; background: #f3f2f1; border-left: 1px solid #dddbd9; flex: none; }
.data .phead { padding-left: 8px; }
.data .dbl { margin-right: 4px; }
.dsearch { margin: 16px 0 9px 4px; width: 171px; height: 24px; background: #fff; border: 1px solid #d1d1d1; border-bottom-color: #616161; border-radius: 4px; display: flex; align-items: center; padding-left: 12px; font-size: 13px; color: #707070; letter-spacing: -0.3px; }
.dsearch span { margin-left: 7px; }
.table { display: flex; align-items: center; height: 24px; padding-left: 15px; }
.table span { margin-left: 6px; padding-top: 1px; }
.table svg + svg { margin-left: 7px; }

.status { height: 19px; flex: none; background: #f3f2f1; border-top: 1px solid #dcdad8; display: flex; padding: 5px 0 0 3px; color: #444; }
.slider { margin: 0 0 0 auto; }
.pct { margin-left: 16px; width: 33px; }
.fit { margin: 0 14px 0 10px; }
</style>
